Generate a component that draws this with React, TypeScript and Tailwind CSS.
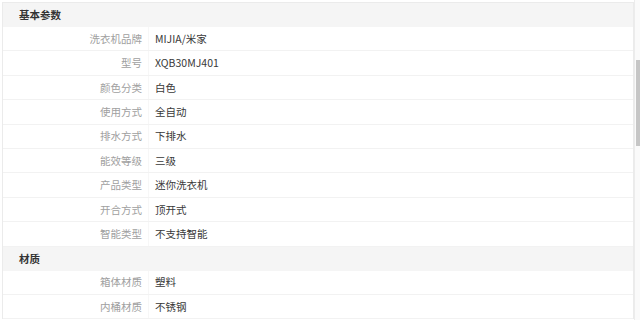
const groups: { title: string; rows: [string, string][] }[] = [
  {
    title: "基本参数",
    rows: [
      ["洗衣机品牌", "MIJIA/米家"],
      ["型号", "XQB30MJ401"],
      ["颜色分类", "白色"],
      ["使用方式", "全自动"],
      ["排水方式", "下排水"],
      ["能效等级", "三级"],
      ["产品类型", "迷你洗衣机"],
      ["开合方式", "顶开式"],
      ["智能类型", "不支持智能"],
    ],
  },
  {
    title: "材质",
    rows: [
      ["箱体材质", "塑料"],
      ["内桶材质", "不锈钢"],
    ],
  },
];

export default function App() {
  return (
    <div
      className="w-[640px] h-[320px] overflow-hidden bg-white flex text-[10.5px]"
      style={{ fontFamily: '"Noto Sans CJK SC", "Noto Sans", sans-serif' }}
    >
      {/* Spec table */}
      <div className="flex-1 pt-[2px] pl-[2px]">
        <div className="border-t border-l border-r border-[#ebebeb]">
          {groups.map((g) => (
            <div key={g.title}>
              <div className="h-[24px] flex items-center pl-[16px] bg-[#f5f5f5] font-bold text-[#333]">
                {g.title}
              </div>
              {g.rows.map(([label, value]) => (
                <div
                  key={label}
                  className="h-[24.4px] flex items-stretch border-b border-[#f2f2f2]"
                >
                  <div className="w-[146px] pr-[6px] flex items-center justify-end text-[#a0a0a0] border-r border-[#f7f7f7]">
                    {label}
                  </div>
                  <div className="pl-[6px] flex items-center text-[#383838]">{value}</div>
                </div>
              ))}
            </div>
          ))}
        </div>
      </div>
      {/* Scrollbar */}
      <div className="w-[6px] h-full relative border-l border-[#ececec] bg-[#fafafa]">
        <div className="absolute right-0 top-[60px] w-[4px] h-[86px] bg-[#c6c6c6]" />
      </div>
    </div>
  );
}
